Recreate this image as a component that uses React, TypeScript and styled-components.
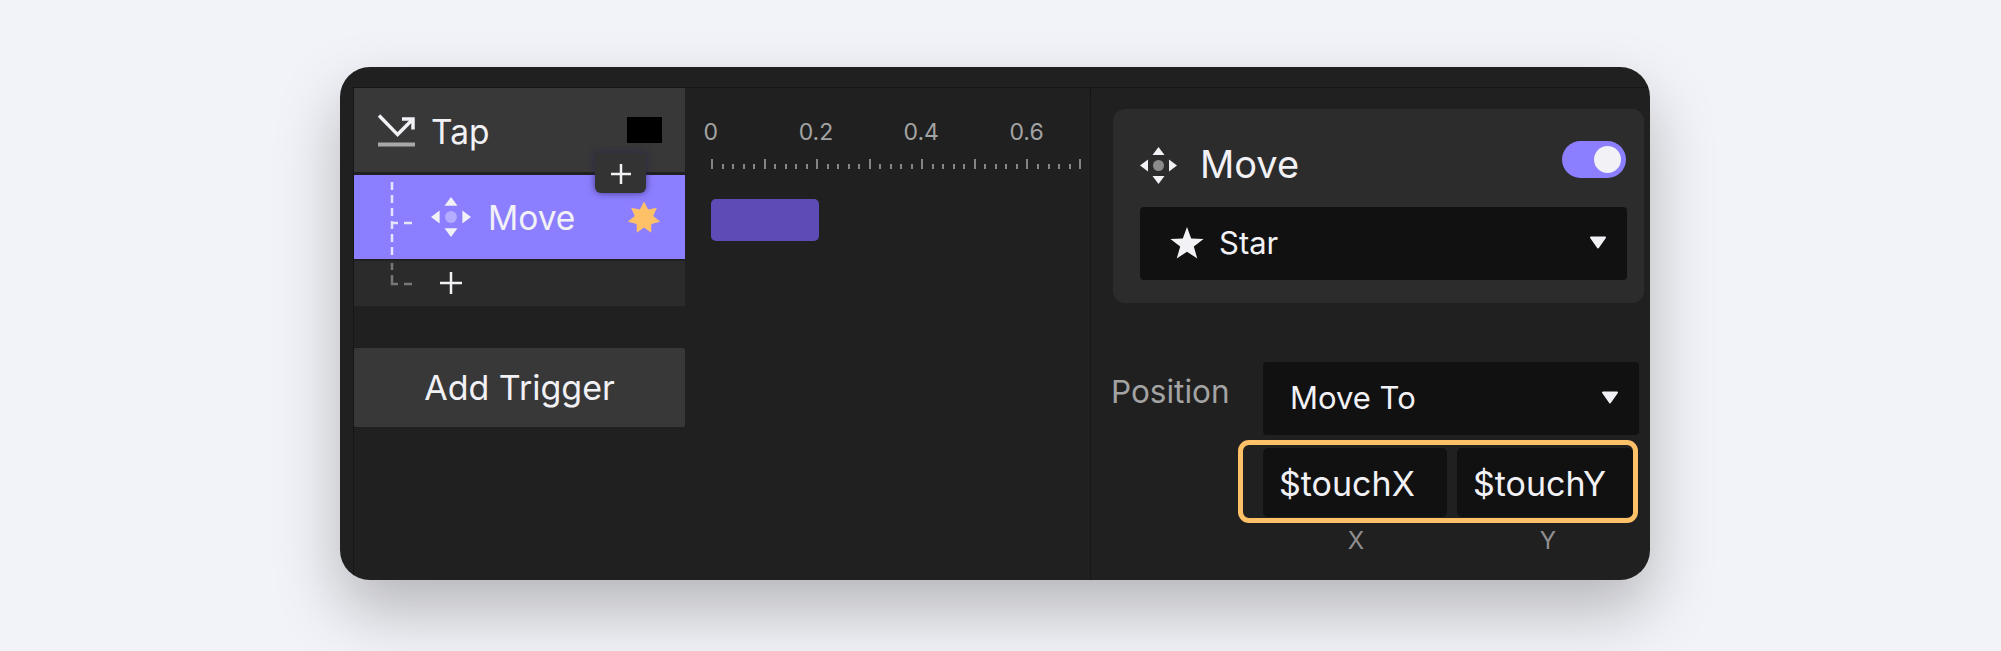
import styled, {createGlobalStyle} from 'styled-components'

const GlobalStyle = createGlobalStyle`
  html, body {
    margin: 0;
    background: #f2f3f8;
  }
  * {
    box-sizing: border-box;
  }
`

const Page = styled.div`
  width: 2001px;
  height: 651px;
  overflow: hidden;
  padding: 67px 0 0 340px;
  background: #f2f3f8;
  font-family: Inter, "Liberation Sans", sans-serif;
  color: #f1f1f6;
`

const Card = styled.div`
  width: 1310px;
  height: 513px;
  padding: 20px 0 0 13px;
  overflow: hidden;
  border-radius: 30px;
  background: #202020;
  box-shadow: 0 30px 64px rgba(0, 0, 0, 0.25);
`

const Workspace = styled.div`
  height: 100%;
  display: grid;
  grid-template-columns: 331px 406px 1fr;
  border-top: 1px dotted #0c0c0c;
  border-left: 1px dotted #0c0c0c;
`

/* left column */
const TriggerColumn = styled.div`
  position: relative;
  display: flex;
  flex-direction: column;
`

const TapRow = styled.div`
  height: 84px;
  margin-bottom: 3px;
  padding: 4px 23px 0 24px;
  display: flex;
  align-items: center;
  gap: 16px;
  background: #383838;
`

const MoveRow = styled.div`
  height: 84px;
  margin-bottom: 2px;
  padding: 0 25px 0 77px;
  display: flex;
  align-items: center;
  gap: 17px;
  background: #8c7fff;
`

const PlusRow = styled.div`
  height: 45px;
  padding: 0 0 1px 86px;
  display: flex;
  align-items: center;
  background: #2b2b2b;
`

const RowLabel = styled.span`
  font-size: 33.5px;
  line-height: 40px;
`

const MoveLabel = styled(RowLabel)`
  margin-top: 2px;
`

const TapIcon = styled.svg`
  margin-top: -4px;
`

const Swatch = styled.div`
  width: 35px;
  height: 26px;
  margin: -4px 0 0 auto;
  background: #000;
`

const EffectIcon = styled.svg`
  width: 32px;
  height: 32px;
  margin-left: auto;
  margin-top: 2px;
`

const AddTrigger = styled.div`
  height: 79px;
  margin-top: 42px;
  display: flex;
  align-items: center;
  justify-content: center;
  border-radius: 2px;
  background: #383838;
  font-size: 34px;
`

const InsertButton = styled.div`
  position: absolute;
  left: 241px;
  top: 65px;
  width: 51px;
  height: 40px;
  padding-top: 2px;
  display: flex;
  align-items: center;
  justify-content: center;
  border-radius: 2px 2px 6px 6px;
  background: #333;
  box-shadow: 0 0 7px rgba(40, 32, 90, 0.75);
`

const TreeLines = styled.svg`
  position: absolute;
  left: 34px;
  top: 91px;
  width: 28px;
  height: 110px;
`

/* timeline */
const Timeline = styled.div`
  border-right: 1px dotted #0c0c0c;
`

const Labels = styled.div`
  margin: 31px 0 0 -27px;
  display: flex;
`

const TimeLabel = styled.span`
  width: 105.3px;
  flex: none;
  text-align: center;
  font-size: 23px;
  line-height: 26px;
  color: #a3a3a3;
`

const Ticks = styled.div`
  height: 10px;
  margin: 14px 0 0 26px;
  display: flex;
  align-items: flex-end;
  gap: 8.53px;
`

const Tick = styled.i<{$major: boolean}>`
  width: 2px;
  flex: none;
  height: ${p => (p.$major ? '10px' : '5px')};
  background: #858585;
`

const ClipBar = styled.div`
  width: 108px;
  height: 42px;
  margin: 30px 0 0 26px;
  border-radius: 5px;
  background: #5f4bb6;
`

/* right column */
const Inspector = styled.div`
  padding: 21px 0 0 22px;
`

const ActionCard = styled.div`
  width: 531px;
  height: 194px;
  padding: 32px 17px 0 27px;
  border-radius: 12px;
  background: #2c2c2c;
`

const ActionHeader = styled.div`
  height: 66px;
  padding-right: 1px;
  display: flex;
  align-items: flex-start;
  gap: 23px;
`

const HeaderIcon = styled.svg`
  width: 37px;
  height: 37px;
  margin-top: 6px;
  flex: none;
`

const ActionTitle = styled.span`
  font-size: 38px;
  line-height: 46px;
`

const Toggle = styled.div`
  width: 64px;
  height: 37px;
  margin-left: auto;
  padding: 5px 5px 5px 0;
  display: flex;
  justify-content: flex-end;
  border-radius: 19px;
  background: #8c7fff;
  &::after {
    content: '';
    width: 27px;
    height: 27px;
    border-radius: 50%;
    background: #f1f1f6;
  }
`

const Select = styled.div<{$pad: number}>`
  height: 73px;
  padding: 0 20px 2px ${p => p.$pad}px;
  display: flex;
  align-items: center;
  border-radius: 4px;
  background: #111;
  font-size: 31px;
`

const StarIcon = styled.svg`
  width: 34px;
  height: 32px;
  margin-right: 15px;
`

const Caret = styled.svg`
  width: 18px;
  height: 13px;
  margin-left: auto;
`

const PositionGrid = styled.div`
  margin-top: 59px;
  display: grid;
  grid-template-columns: 150px 376px;
`

const FieldLabel = styled.div`
  margin: 12px 0 0 -2px;
  font-size: 31.5px;
  line-height: 36px;
  color: #a3a3a3;
`

const HighlightFrame = styled.div`
  width: 400px;
  height: 83px;
  margin: 5px 0 0 -25px;
  padding: 3px 0 0 20px;
  display: flex;
  gap: 10px;
  border: 5px solid #ffc168;
  border-radius: 11px;
`

const VarField = styled.div<{$width: number}>`
  width: ${p => p.$width}px;
  height: 69px;
  padding: 2px 0 0 16px;
  display: flex;
  align-items: center;
  border-radius: 5px;
  background: #111;
  font-size: 34px;
`

const AxisRow = styled.div`
  margin-top: 5px;
  padding-left: 2px;
  display: flex;
  gap: 10px;
`

const AxisLabel = styled.span`
  width: 184px;
  text-align: center;
  font-size: 24px;
  line-height: 26px;
  color: #8e8e8e;
`

const MoveGlyph = ({dot}: {dot: string}) => (
  <>
    <circle cx="18.5" cy="18.5" r="5.5" fill={dot} />
    <g fill="#f1f1f6">
      <polygon points="18.5,0 24.5,8 12.5,8" />
      <polygon points="18.5,37 24.5,29 12.5,29" />
      <polygon points="0,18.5 8,12.5 8,24.5" />
      <polygon points="37,18.5 29,12.5 29,24.5" />
    </g>
  </>
)

const Plus = ({size, weight}: {size: number; weight: number}) => (
  <svg width={size} height={size} viewBox={`0 0 ${size} ${size}`}>
    <path d={`M${size / 2} 0V${size}M0 ${size / 2}H${size}`} stroke="#f1f1f6" strokeWidth={weight} />
  </svg>
)

const Arrow = () => (
  <Caret viewBox="0 0 18 13">
    <path d="M2 1.5H16L9 11.5Z" fill="#f1f1f6" stroke="#f1f1f6" strokeWidth="2" strokeLinejoin="round" />
  </Caret>
)

// seven pointed burst on the Move row
const burst = Array.from({length: 14}, (_, i) => {
  const r = i % 2 ? 9.5 : 16.5
  const a = (i * Math.PI) / 7 - Math.PI / 2
  return `${(16 + r * Math.cos(a)).toFixed(2)},${(16 + r * Math.sin(a)).toFixed(2)}`
}).join(' ')

const tickCount = 36
const times = ['0', '0.2', '0.4', '0.6']

export default function App() {
  return (
    <Page>
      <GlobalStyle />
      <Card>
        <Workspace>
          <TriggerColumn>
            <TapRow>
              <TapIcon width="37" height="33" viewBox="0 0 37 33">
                <path d="M1 1.5L19.6 20.6L34 6" fill="none" stroke="#f1f1f6" strokeWidth="3.5" />
                <path d="M24 5H35V15.5" fill="none" stroke="#f1f1f6" strokeWidth="3.5" />
                <rect x="0" y="28.5" width="37" height="4" fill="#a8a8a8" />
              </TapIcon>
              <RowLabel>Tap</RowLabel>
              <Swatch />
            </TapRow>
            <MoveRow>
              <svg width="40" height="40" viewBox="0 0 37 37">
                <MoveGlyph dot="#b5adff" />
              </svg>
              <MoveLabel>Move</MoveLabel>
              <EffectIcon viewBox="0 0 32 32">
                <polygon points={burst} fill="#ffc168" />
              </EffectIcon>
            </MoveRow>
            <PlusRow>
              <Plus size={22} weight={2.5} />
            </PlusRow>
            <AddTrigger>Add Trigger</AddTrigger>
            <InsertButton>
              <Plus size={20} weight={2.5} />
            </InsertButton>
            <TreeLines viewBox="0 0 28 110">
              <g fill="none" stroke="#e6e3ff" strokeWidth="2.5">
                <path d="M4 3V80" strokeDasharray="8 5" />
                <path d="M4 44H10M16 44H24" />
              </g>
              <g fill="none" stroke="#777" strokeWidth="2.5">
                <path d="M4 84V91M4 96V105H10M16 105H24" />
              </g>
            </TreeLines>
          </TriggerColumn>

          <Timeline>
            <Labels>
              {times.map(t => (
                <TimeLabel key={t}>{t}</TimeLabel>
              ))}
            </Labels>
            <Ticks>
              {Array.from({length: tickCount}, (_, i) => (
                <Tick key={i} $major={i % 5 === 0} />
              ))}
            </Ticks>
            <ClipBar />
          </Timeline>

          <Inspector>
            <ActionCard>
              <ActionHeader>
                <HeaderIcon viewBox="0 0 37 37">
                  <MoveGlyph dot="#8c8c8c" />
                </HeaderIcon>
                <ActionTitle>Move</ActionTitle>
                <Toggle />
              </ActionHeader>
              <Select $pad={30}>
                <StarIcon viewBox="0 0 34 32">
                  <polygon
                    points="17,0 21.2,11.6 33.6,12 23.8,19.6 27.3,31.6 17,24.7 6.7,31.6 10.2,19.6 0.4,12 12.8,11.6"
                    fill="#f1f1f6"
                  />
                </StarIcon>
                Star
                <Arrow />
              </Select>
            </ActionCard>

            <PositionGrid>
              <FieldLabel>Position</FieldLabel>
              <div>
                <Select $pad={27}>
                  Move To
                  <Arrow />
                </Select>
                <HighlightFrame>
                  <VarField $width={184}>$touchX</VarField>
                  <VarField $width={176}>$touchY</VarField>
                </HighlightFrame>
                <AxisRow>
                  <AxisLabel>X</AxisLabel>
                  <AxisLabel>Y</AxisLabel>
                </AxisRow>
              </div>
            </PositionGrid>
          </Inspector>
        </Workspace>
      </Card>
    </Page>
  )
}
